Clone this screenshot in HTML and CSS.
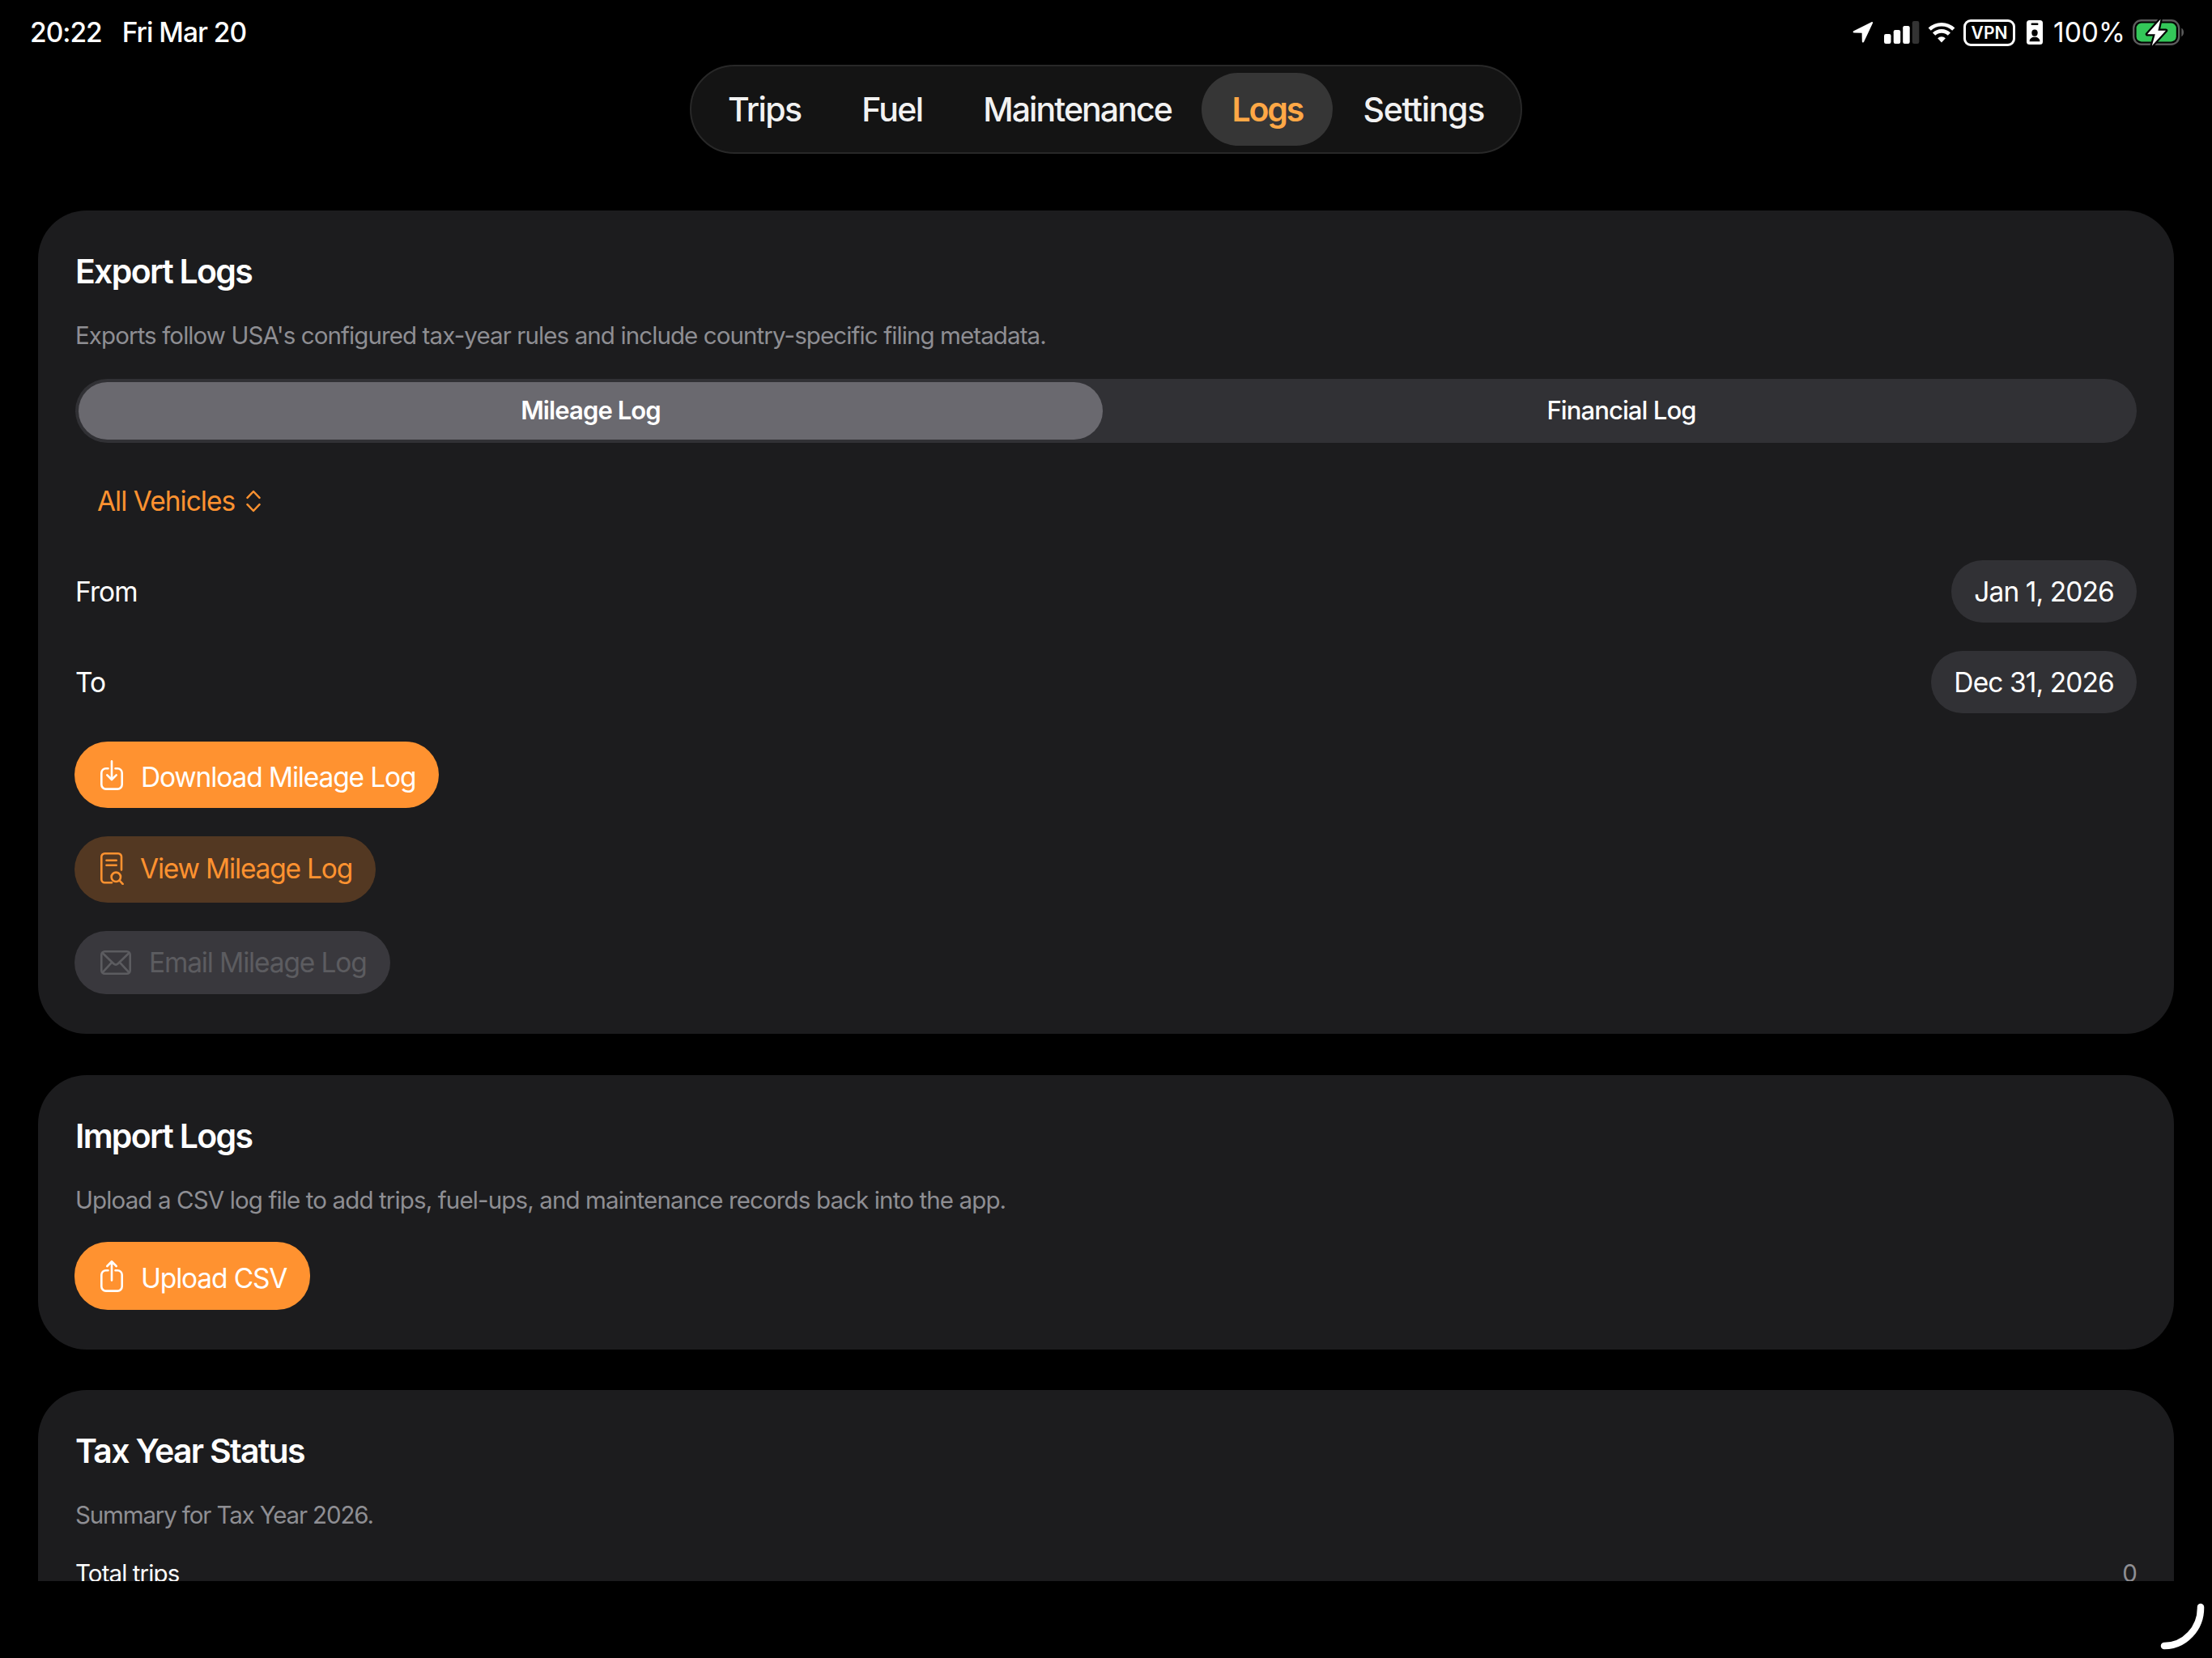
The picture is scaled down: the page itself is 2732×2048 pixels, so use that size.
FILE: index.html
```
<!DOCTYPE html>
<html lang="en">
<head>
  <meta charset="UTF-8">
  <title>Logs</title>
  <link rel="stylesheet" href="styles.css">
</head>
<body>
  <header class="status-bar">
    <div class="status-left">
      <span class="time">20:22</span>
      <span class="date">Fri Mar 20</span>
    </div>
    <div class="status-right">
      <svg class="location" width="26" height="28" viewBox="0 0 26 28">
        <path d="M23.5 1.2 1.4 12.2c-1.4.7-.9 2.4.6 2.4l9.6.2.2 10.2c0 1.7 1.8 2.1 2.4.6L24.9 2.7c.5-1.2-.4-2-1.4-1.5z" fill="#fff"/>
      </svg>
      <svg class="signal" width="44" height="28" viewBox="0 0 44 28">
        <rect x="0" y="16" width="8.5" height="12" rx="2.2" fill="#fff"/>
        <rect x="11.7" y="11" width="8.5" height="17" rx="2.2" fill="#fff"/>
        <rect x="23.2" y="6" width="8.5" height="22" rx="2.2" fill="#fff"/>
        <rect x="34.8" y="0" width="8.5" height="28" rx="2.2" fill="#333"/>
      </svg>
      <svg class="wifi" width="34" height="26" viewBox="0 0 34 26">
        <path d="M2.2 9.2a21.3 21.3 0 0 1 29.6 0" fill="none" stroke="#fff" stroke-width="4.6"/>
        <path d="M7.6 15.2a13.4 13.4 0 0 1 18.8 0" fill="none" stroke="#fff" stroke-width="4.6"/>
        <path d="M17 25.4l-4.9-5.2a7 7 0 0 1 9.8 0z" fill="#fff"/>
      </svg>
      <span class="vpn">VPN</span>
      <svg class="badge" width="20" height="30" viewBox="0 0 20 30">
        <rect width="20" height="30" rx="3.5" fill="#fff"/>
        <rect x="5.5" y="3.6" width="9" height="2.4" rx="1.2" fill="#000"/>
        <ellipse cx="10" cy="15.6" rx="3.7" ry="4.2" fill="#000"/>
        <path d="M3.6 26.2c0-3.4 2.8-5.4 6.4-5.4s6.400 2 6.400 5.400z" fill="#000"/>
      </svg>
      <span class="percent">100%</span>
      <svg class="battery" width="64" height="34" viewBox="0 0 64 34">
        <rect x="1.2" y="2.2" width="56" height="29.6" rx="9.5" fill="none" stroke="#5c5c5c" stroke-width="2.4"/>
        <path d="M60.3 11.8c3.6 1.600 3.600 8.800 0 10.400z" fill="#5c5c5c"/>
        <rect x="4.6" y="5.6" width="49.2" height="22.8" rx="6.2" fill="#34c759"/>
        <path d="M34.5.8 18 19.3h9.8L23.8 33.4 41 14.7h-9.6z" fill="#fff" stroke="#000" stroke-width="4.5" stroke-linejoin="round" paint-order="stroke"/>
      </svg>
    </div>
  </header>

  <nav class="tab-bar">
    <a class="tab trips">Trips</a>
    <a class="tab fuel">Fuel</a>
    <a class="tab maintenance">Maintenance</a>
    <a class="tab logs active">Logs</a>
    <a class="tab settings">Settings</a>
  </nav>

  <main class="content">
    <section class="card export">
      <h2>Export Logs</h2>
      <p class="hint export-hint">Exports follow USA's configured tax-year rules and include country-specific filing metadata.</p>
      <div class="segmented">
        <span class="segment selected">Mileage Log</span>
        <span class="segment">Financial Log</span>
      </div>
      <div class="picker">
        <span>All Vehicles</span>
        <svg width="18" height="28" viewBox="0 0 18 28">
          <path d="M1.5 9.8 9 2l7.5 7.8M1.5 18.2 9 26l7.5-7.8" fill="none" stroke="#ff9230" stroke-width="2.5" stroke-linecap="round" stroke-linejoin="round"/>
        </svg>
      </div>
      <div class="row">
        <span>From</span>
        <span class="date-pill">Jan 1, 2026</span>
      </div>
      <div class="row">
        <span>To</span>
        <span class="date-pill">Dec 31, 2026</span>
      </div>
      <button class="btn primary download">
        <svg width="28" height="37" viewBox="0 0 28 37">
          <path d="M9.5 10.3H6.8a5.5 5.5 0 0 0-5.5 5.5v14.3a5.5 5.5 0 0 0 5.5 5.5h14.4a5.5 5.5 0 0 0 5.5-5.5V15.8a5.5 5.5 0 0 0-5.5-5.5h-2.7M14 1.3v22.2M8.3 18.3l5.7 5.7 5.7-5.7"/>
        </svg>
        <span>Download Mileage Log</span>
      </button>
      <button class="btn tinted view">
        <svg width="29" height="40" viewBox="0 0 29 40">
          <path d="M26 21.5V5.3a4 4 0 0 0-4-4H5.3a4 4 0 0 0-4 4v28a4 4 0 0 0 4 4H14M7.5 9.8h12.2M7.5 15.8h12.2"/>
          <circle cx="19.3" cy="30.3" r="5.7"/>
          <path d="M23.6 34.7l4 4.2"/>
        </svg>
        <span>View Mileage Log</span>
      </button>
      <button class="btn disabled email" disabled>
        <svg width="38" height="30" viewBox="0 0 38 30">
          <rect x="1.3" y="1.3" width="35.4" height="27.4" rx="4"/>
          <path d="M2.5 3l13.7 13.2c1.8 1.7 3.8 1.7 5.6 0L35.5 3M2.5 27.4 14 14.8M35.5 27.4 24 14.8"/>
        </svg>
        <span>Email Mileage Log</span>
      </button>
    </section>

    <section class="card import">
      <h2>Import Logs</h2>
      <p class="hint import-hint">Upload a CSV log file to add trips, fuel-ups, and maintenance records back into the app.</p>
      <button class="btn primary upload">
        <svg width="28" height="40" viewBox="0 0 28 40">
          <path d="M9.5 13.3H6.8a5.5 5.5 0 0 0-5.5 5.5v14.3a5.5 5.5 0 0 0 5.5 5.5h14.4a5.5 5.5 0 0 0 5.5-5.5V18.8a5.5 5.5 0 0 0-5.5-5.5h-2.7M14 25.5V2.3M8.3 8l5.7-5.9L19.7 8"/>
        </svg>
        <span>Upload CSV</span>
      </button>
    </section>

    <section class="card tax">
      <h2>Tax Year Status</h2>
      <p class="hint tax-hint">Summary for Tax Year 2026.</p>
      <div class="stat">
        <span>Total trips</span>
        <span class="value">0</span>
      </div>
    </section>
  </main>

  <svg class="corner" width="56" height="60" viewBox="0 0 56 60">
    <path d="M50 6A45 47 0 0 1 5 54" fill="none" stroke="#fff" stroke-width="8.5" stroke-linecap="round"/>
  </svg>
</body>
</html>
```
FILE: styles.css
```
* {
  box-sizing: border-box;
}

body {
  margin: 0;
  width: 2732px;
  height: 2048px;
  overflow: hidden;
  background: #000;
  color: #fff;
  font-family: Inter, "Liberation Sans", sans-serif;
  font-size: 33.5px;
  letter-spacing: -0.9px;
}

.status-bar {
  display: flex;
  justify-content: space-between;
  align-items: center;
  height: 80px;
  padding: 0 34px 0 37px;
  line-height: 40px;
}

.status-left {
  display: flex;
  gap: 25px;
  font-weight: 500;
  letter-spacing: -1px;
}

.status-right {
  display: flex;
  align-items: center;
  letter-spacing: 0;
}

.signal {
  margin-left: 13px;
}

.wifi {
  margin-left: 10px;
}

.vpn {
  width: 64px;
  height: 33px;
  margin-left: 10px;
  border: 3px solid #fff;
  border-radius: 9px;
  font-size: 21px;
  font-weight: 600;
  line-height: 27px;
  text-align: center;
}

.badge {
  margin-left: 14px;
}

.percent {
  width: 88px;
  margin-left: 13px;
}

.battery {
  margin-left: 10px;
}

.tab-bar {
  display: flex;
  align-items: center;
  justify-content: space-between;
  width: 1028px;
  height: 110px;
  margin: 0 auto;
  padding: 0 8px;
  background: #141414;
  border: 2px solid #282828;
  border-radius: 55px;
}

.tab {
  height: 90px;
  padding: 0 37px;
  border-radius: 45px;
  font-size: 41px;
  font-weight: 500;
  line-height: 90px;
  letter-spacing: -1.6px;
  color: #f2f2f2;
}

.tab.maintenance {
  letter-spacing: -1.9px;
}

.tab.settings {
  letter-spacing: -1.3px;
}

.tab.active {
  background: #363636;
  color: #ffa846;
  font-weight: 600;
  letter-spacing: -2.2px;
}

.content {
  display: flex;
  flex-direction: column;
  gap: 50px;
  height: 1693px;
  margin-top: 70px;
  padding: 0 47px;
  overflow: hidden;
}

.card {
  flex-shrink: 0;
  display: flex;
  flex-direction: column;
  align-items: flex-start;
  padding: 50px 46px 49px;
  background: #1c1c1e;
  border-radius: 60px;
}

.card.export {
  margin-bottom: 1px;
}

h2 {
  margin: 0;
  font-size: 41px;
  font-weight: 600;
  line-height: 50px;
  letter-spacing: -1.7px;
}

.hint {
  margin: 34px 0 0;
  font-size: 29.5px;
  line-height: 40px;
  color: #8e8e93;
}

.import-hint {
  letter-spacing: -0.87px;
}

.tax-hint {
  letter-spacing: -1.15px;
}

.segmented {
  display: flex;
  gap: 8px;
  width: 100%;
  height: 79px;
  margin-top: 34px;
  padding: 4px;
  background: #313135;
  border-radius: 40px;
}

.segment {
  flex: 1;
  border-radius: 36px;
  font-size: 31px;
  font-weight: 500;
  line-height: 70px;
  text-align: center;
}

.segment.selected {
  background: #6a696f;
  font-weight: 600;
}

.picker {
  display: flex;
  align-items: center;
  gap: 14px;
  height: 73px;
  margin: 35px 0 2px;
  padding-left: 27px;
  color: #ff9230;
  letter-spacing: -1px;
}

.row {
  display: flex;
  justify-content: space-between;
  align-items: center;
  width: 100%;
  margin-top: 35px;
}

.date-pill {
  height: 77px;
  padding: 0 28px;
  background: #313135;
  border-radius: 39px;
  line-height: 78px;
}

.btn {
  display: flex;
  align-items: center;
  height: 82px;
  margin: 35px 0 0 -1px;
  padding: 0 29px 0 32px;
  border: none;
  border-radius: 41px;
  font-family: inherit;
  font-size: 33.5px;
  letter-spacing: -1.15px;
}

.btn svg {
  margin-right: 22px;
  fill: none;
  stroke: currentColor;
  stroke-width: 2.6;
  stroke-linecap: round;
  stroke-linejoin: round;
}

.primary {
  background: #ff9230;
  color: #fff;
}

.primary span {
  padding-top: 5px;
}

.tinted {
  padding-bottom: 3px;
  background: #533822;
  color: #ff9230;
  letter-spacing: -1.2px;
}

.tinted svg {
  margin-right: 20px;
}

.disabled {
  height: 78px;
  background: #39383d;
  color: #5c5c60;
}

.upload {
  height: 84px;
  margin-top: 32px;
}

.stat {
  display: flex;
  justify-content: space-between;
  width: 100%;
  margin-top: 32px;
  font-size: 29.5px;
  line-height: 40px;
}

.stat .value {
  color: #8e8e93;
}

/* pencil drag handle in the screen corner */
.corner {
  position: absolute;
  right: 8px;
  bottom: 9px;
}
```
